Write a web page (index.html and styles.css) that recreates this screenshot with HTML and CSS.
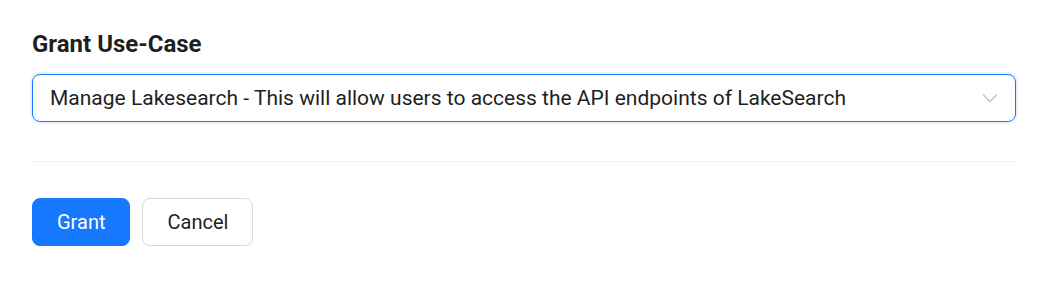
FILE: index.html
```html
<!DOCTYPE html>
<html>
<head>
<title>Grant Use-Case</title>
<link rel="stylesheet" href="styles.css">
</head>
<body>
<div class="panel">
  <div class="heading">Grant Use-Case</div>
  <div class="select">
    <span class="select-value">Manage Lakesearch - This will allow users to access the API endpoints of LakeSearch</span>
    <svg class="arrow" width="16" height="10" viewBox="0 0 16 10"><path d="M1 1.5 L8 8.5 L15 1.5" fill="none" stroke="#bfbfbf" stroke-width="1.3"/></svg>
  </div>
  <div class="divider"></div>
  <div class="actions">
    <button class="btn btn-primary">Grant</button>
    <button class="btn">Cancel</button>
  </div>
</div>
</body>
</html>
```
FILE: styles.css
```css
body {
  margin: 0;
  background: #fff;
  font-family: Roboto, "Liberation Sans", sans-serif;
  color: rgba(0, 0, 0, 0.88);
}
.panel {
  padding: 30px 28px 0 32px;
}
.heading {
  font-size: 24px;
  font-weight: 700;
  line-height: 28px;
  color: #1f1f1f;
}
.select {
  margin-top: 16px;
  height: 48px;
  box-sizing: border-box;
  border: 1px solid #1677ff;
  border-radius: 8px;
  box-shadow: 0 0 0 2px rgba(5, 145, 255, 0.1);
  display: flex;
  align-items: center;
  padding: 0 17px 0 17px;
}
.select-value {
  flex: 1;
  font-size: 21px;
  color: #1f1f1f;
}
.arrow {
  display: block;
}
.divider {
  margin-top: 39px;
  border-top: 1px solid #f0f0f0;
}
.actions {
  margin-top: 36px;
  display: flex;
  gap: 12px;
}
.btn {
  height: 48px;
  padding: 0 24px;
  font-family: Roboto, "Liberation Sans", sans-serif;
  font-size: 20px;
  border-radius: 8px;
  border: 1px solid #d9d9d9;
  background: #fff;
  color: #1f1f1f;
  box-shadow: 0 2px 0 rgba(0, 0, 0, 0.02);
}
.btn-primary {
  background: #1677ff;
  border-color: #1677ff;
  color: #fff;
  box-shadow: 0 2px 0 rgba(5, 145, 255, 0.1);
}
```
